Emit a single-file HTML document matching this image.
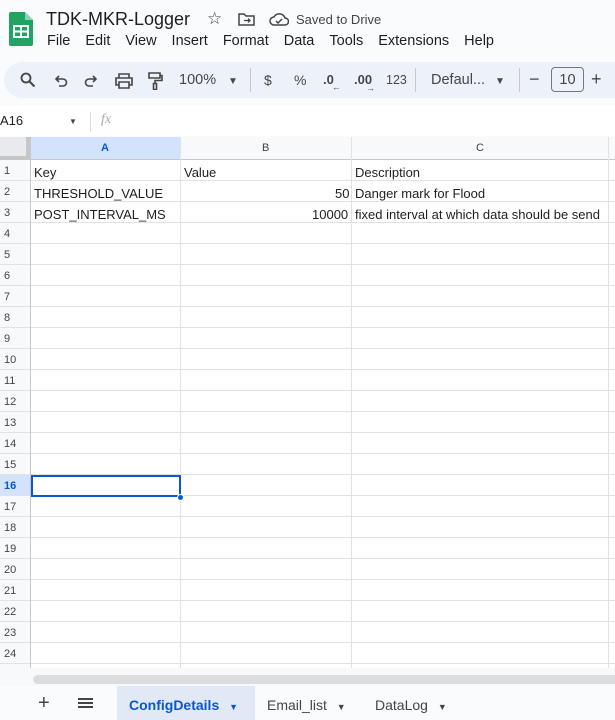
<!DOCTYPE html>
<html><head><meta charset="utf-8"><style>
*{box-sizing:border-box;margin:0;padding:0}
body{width:615px;height:720px;overflow:hidden;background:#f9fbfd;font-family:"Liberation Sans",Arial,sans-serif;color:#1f1f1f;position:relative}
.abs{position:absolute}
.menu span{margin-right:15px}
.tb{position:absolute;top:62px;left:4px;width:640px;height:36px;background:#edf2fa;border-radius:18px}
.tbt{position:absolute;top:72px;font-size:14px;color:#444746}
.grid{position:absolute;left:0;top:137px;width:615px;height:540px;background:#fff}
.hl{position:absolute;left:0;width:615px;height:1px;background:#e2e2e2}
.vl{position:absolute;top:137px;width:1px;background:#e2e2e2}
.rn{position:absolute;left:0;width:30px;font-size:11px;color:#444;padding-left:4px}
.c{position:absolute;font-size:13px;color:#1f1f1f}
</style></head><body>
<svg class="abs" style="left:9px;top:12px" width="24" height="34" viewBox="0 0 24 34"><path d="M2 0h14l8 8v24a2 2 0 0 1-2 2H2a2 2 0 0 1-2-2V2a2 2 0 0 1 2-2z" fill="#1fa463"/><path d="M16 0v8h8z" fill="#8ed1b1"/><rect x="5" y="14" width="14" height="11" fill="none" stroke="#fff" stroke-width="2"/><path d="M5 19.5h14M12 14v11" stroke="#fff" stroke-width="2"/></svg>
<div class="abs" style="left:46px;top:9px;font-size:18px;color:#1f1f1f">TDK-MKR-Logger</div>
<div class="abs" style="left:207px;top:9px;font-size:17px;color:#444">☆</div>
<svg class="abs" style="left:238px;top:13px" width="17" height="13" viewBox="0 0 17 13"><path d="M1 1h5l2 2h8v9H1z" fill="none" stroke="#444" stroke-width="1.5"/><path d="M6 7.5h6M10 5.5l2 2-2 2" stroke="#444" stroke-width="1.3" fill="none"/></svg>
<svg class="abs" style="left:269px;top:12px" width="20" height="14" viewBox="0 0 20 14"><path d="M5 13a4 4 0 0 1 0-8 6 6 0 0 1 11 1 3.5 3.5 0 0 1 0 7z" fill="none" stroke="#444" stroke-width="1.5"/><path d="M7 9l2 2 4-4" stroke="#444" stroke-width="1.5" fill="none"/></svg>
<div class="abs" style="left:296px;top:12px;font-size:13px;color:#444">Saved to Drive</div>
<div class="abs menu" style="left:47px;top:33px;font-size:14.5px;white-space:nowrap"><span>File</span><span>Edit</span><span>View</span><span>Insert</span><span>Format</span><span>Data</span><span>Tools</span><span>Extensions</span><span>Help</span></div>
<div class="tb"></div>
<svg class="abs" style="left:20px;top:72px" width="16" height="16" viewBox="0 0 16 16"><circle cx="6" cy="6" r="4.5" fill="none" stroke="#444" stroke-width="1.8"/><path d="M9.5 9.5l5 5" stroke="#444" stroke-width="2"/></svg>
<svg class="abs" style="left:54px;top:74px" width="14" height="14" viewBox="0 0 14 14"><path d="M3 5h6a3.5 3.5 0 0 1 0 7H5M5 2L2 5l3 3" fill="none" stroke="#444" stroke-width="1.6"/></svg>
<svg class="abs" style="left:84px;top:74px" width="14" height="14" viewBox="0 0 14 14"><path d="M11 5H5a3.5 3.5 0 0 0 0 7h4M9 2l3 3-3 3" fill="none" stroke="#444" stroke-width="1.6"/></svg>
<svg class="abs" style="left:115px;top:73px" width="18" height="16" viewBox="0 0 18 16"><path d="M4 5V1h10v4M4 12H1V5h16v7h-3M4 9h10v6H4z" fill="none" stroke="#444" stroke-width="1.6"/></svg>
<svg class="abs" style="left:147px;top:72px" width="16" height="18" viewBox="0 0 16 18"><path d="M2 1h11v5H2zM13 3.5h2v5H8v3M6.5 11.5h3v6h-3z" fill="none" stroke="#444" stroke-width="1.6"/></svg>
<div class="tbt" style="left:179px;font-size:14.5px">100%</div>
<div class="tbt" style="left:228px;font-size:10px;top:76px">▼</div>
<div class="abs" style="left:250px;top:68px;width:1px;height:24px;background:#c7c7c7"></div>
<div class="tbt" style="left:264px">$</div>
<div class="tbt" style="left:294px">%</div>
<div class="tbt" style="left:323px;font-weight:bold;font-size:13px">.0<span style="font-size:9px;position:relative;top:6px;left:-2px">←</span></div>
<div class="tbt" style="left:354px;font-weight:bold;font-size:13px">.00<span style="font-size:9px;position:absolute;top:11px;left:12px">→</span></div>
<div class="tbt" style="left:386px;font-size:12.5px;top:73px">123</div>
<div class="abs" style="left:415px;top:68px;width:1px;height:24px;background:#c7c7c7"></div>
<div class="tbt" style="left:431px;font-size:14.5px">Defaul...</div>
<div class="tbt" style="left:495px;font-size:10px;top:76px">▼</div>
<div class="abs" style="left:519px;top:68px;width:1px;height:24px;background:#c7c7c7"></div>
<div class="tbt" style="left:529px;font-size:18px;top:69px">−</div>
<div class="abs" style="left:551px;top:67px;width:33px;height:25px;border:1px solid #747775;border-radius:4px;font-size:14.5px;text-align:center;line-height:24px;color:#444">10</div>
<div class="tbt" style="left:591px;font-size:18px;top:69px">+</div>
<div class="abs" style="left:0;top:106px;width:615px;height:30px;background:#fff"></div>
<div class="abs" style="left:0;top:113px;font-size:13px">A16</div>
<div class="abs" style="left:69px;top:117px;font-size:8px;color:#444">▼</div>
<div class="abs" style="left:90px;top:112px;width:1px;height:20px;background:#ddd"></div>
<div class="abs" style="left:101px;top:112px;font-size:14px;font-style:italic;color:#aaa;font-family:'Liberation Serif',serif">fx</div>
<div class="grid"></div>
<div class="abs" style="left:0;top:137px;width:615px;height:23px;background:#f8f9fa"></div>
<div class="abs" style="left:0;top:137px;width:30px;height:540px;background:#f8f9fa"></div>
<div class="abs" style="left:0;top:137px;width:30px;height:23px;background:#e8eaed;border-right:4px solid #c4c7c5;border-bottom:4px solid #c4c7c5"></div>
<div class="abs" style="left:31px;top:137px;width:150px;height:23px;background:#d3e3fd"></div>
<div class="abs" style="left:0;top:475px;width:30px;height:21px;background:#d3e3fd"></div>
<div id="lines"></div>
<div class="vl" style="left:30px;height:540px;background:#c7c7c7"></div>
<div class="vl" style="left:180px;height:540px"></div>
<div class="vl" style="left:351px;height:540px"></div>
<div class="vl" style="left:608px;height:540px"></div>
<div class="abs" style="left:101px;top:142px;font-size:11px;font-weight:bold;color:#0b57d0">A</div>
<div class="abs" style="left:262px;top:142px;font-size:11px;color:#444">B</div>
<div class="abs" style="left:476px;top:142px;font-size:11px;color:#444">C</div>
<div class="c" style="left:34px;top:165px">Key</div>
<div class="c" style="left:184px;top:165px">Value</div>
<div class="c" style="left:355px;top:165px">Description</div>
<div class="c" style="left:34px;top:186px">THRESHOLD_VALUE</div>
<div class="c" style="left:335px;top:186px">50</div>
<div class="c" style="left:355px;top:186px">Danger mark for Flood</div>
<div class="c" style="left:34px;top:207px">POST_INTERVAL_MS</div>
<div class="c" style="left:312px;top:207px">10000</div>
<div class="c" style="left:355px;top:207px;white-space:nowrap">fixed interval at which data should be send</div>
<div class="abs" style="left:31px;top:475px;width:150px;height:22px;border:2px solid #0b57d0"></div>
<div class="abs" style="left:177px;top:494px;width:7px;height:7px;border-radius:50%;background:#0b57d0;border:1px solid #fff"></div>
<div class="abs" style="left:0;top:668px;width:615px;height:18px;background:#f8f9fa"></div>
<div class="abs" style="left:33px;top:675px;width:590px;height:9px;border-radius:5px;background:#dadce0"></div>
<div class="abs" style="left:0;top:686px;width:615px;height:34px;background:#f9fbfd"></div>
<div class="abs" style="left:38px;top:692px;font-size:20px;color:#444">+</div>
<div class="abs" style="left:78px;top:698px;width:15px;height:2px;background:#444;box-shadow:0 4px 0 #444,0 8px 0 #444"></div>
<div class="abs" style="left:117px;top:686px;width:138px;height:34px;background:#e1e9f7"></div>
<div class="abs" style="left:129px;top:697px;font-size:14px;font-weight:bold;color:#0b57d0">ConfigDetails <span style="font-size:9px;margin-left:6px">▼</span></div>
<div class="abs" style="left:267px;top:697px;font-size:14px;color:#444">Email_list <span style="font-size:9px;margin-left:6px">▼</span></div>
<div class="abs" style="left:375px;top:697px;font-size:14px;color:#444">DataLog <span style="font-size:9px;margin-left:6px">▼</span></div>
<script>
var h='';for(var i=0;i<25;i++){var t=160+i*21;h+='<div class="hl" style="top:'+(t+20)+'px"></div>';h+='<div class="rn" style="top:'+(t+5)+'px'+(i==15?';font-weight:bold;color:#0b57d0':'')+'">'+(i+1)+'</div>';}
h+='<div class="hl" style="top:159px;background:#c7c7c7"></div>';
document.getElementById('lines').innerHTML=h;
</script>
</body></html>
